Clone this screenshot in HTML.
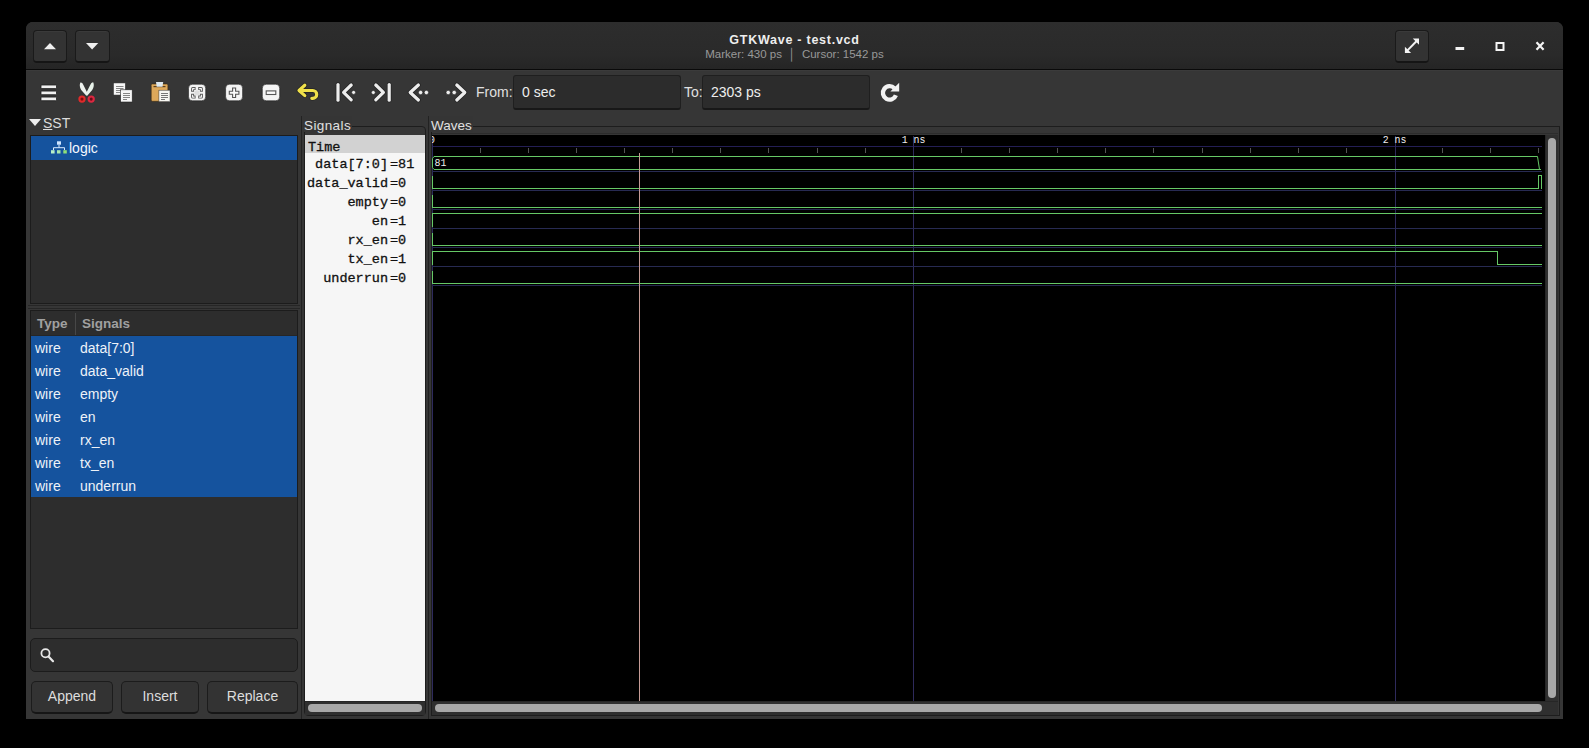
<!DOCTYPE html>
<html><head><meta charset="utf-8">
<style>
*{margin:0;padding:0;box-sizing:border-box}
html,body{width:1589px;height:748px;background:#000;overflow:hidden;font-family:"Liberation Sans",sans-serif}
.a{position:absolute}
#win{left:26px;top:22px;width:1537px;height:697px;background:#363636;border-radius:7px 7px 0 0;overflow:hidden}
#hdr{left:0;top:0;width:1537px;height:48px;background:linear-gradient(#2d2d2d,#2a2a2a 70%,#252525);border-bottom:1px solid #0a0a0a;box-shadow:0 1px #3b3b3b}
.hb{background:#333;border:1px solid #1a1a1a;border-bottom:2px solid #151515;border-radius:4px;box-shadow:inset 0 1px #3a3a3a}
.mono{font-family:"Liberation Mono",monospace;-webkit-text-stroke:0.3px #111}
.tv{background:#2d2d2d;border:1px solid #1c1c1c}
.btn{background:#333;border:1px solid #1c1c1c;border-bottom:2px solid #161616;border-radius:5px;color:#ddd;font-size:14px;text-align:center;line-height:29px}
.wire{color:#eef2f8;font-size:14px}
.sig{left:288px;width:100px;text-align:right;font-size:13.5px;color:#111}
.val{left:390px;font-size:13.5px;color:#111}
.lbl{color:#e0e0e0;font-size:14.3px}
.ent{background:#2c2c2c;border:1px solid #1f1f1f;border-bottom:2px solid #181818;border-radius:3px}
.frame{border:1px solid #1d1d1d;border-radius:4px}
</style></head><body>
<div id="win" class="a">
 <div id="hdr" class="a">
  <div class="a hb" style="left:7px;top:8px;width:34px;height:33px"></div>
  <div class="a hb" style="left:49px;top:8px;width:35px;height:33px"></div>
  <div class="a hb" style="left:1369px;top:8px;width:34px;height:33px"></div>
  <div class="a" style="left:0;top:10.5px;width:1537px;text-align:center;color:#eee;font-weight:bold;font-size:12.5px;letter-spacing:0.75px">GTKWave - test.vcd</div>
  <div class="a" style="left:0;top:26px;width:1537px;text-align:center;color:#999;font-size:11.5px">Marker: 430 ps &nbsp;│&nbsp; Cursor: 1542 ps</div>
 </div>
</div>

<!-- toolbar entries -->
<div class="a lbl" style="left:476px;top:84px;font-size:14px">From:</div>
<div class="a ent" style="left:513px;top:75px;width:168px;height:35px"></div>
<div class="a" style="left:522px;top:84px;color:#eee;font-size:14px">0 sec</div>
<div class="a lbl" style="left:684px;top:84px;font-size:14px">To:</div>
<div class="a ent" style="left:702px;top:75px;width:168px;height:35px"></div>
<div class="a" style="left:711px;top:84px;color:#eee;font-size:14px">2303 ps</div>

<!-- pane separators -->
<div class="a" style="left:301px;top:116px;width:1px;height:603px;background:#222"></div>
<div class="a" style="left:428px;top:116px;width:1px;height:603px;background:#222"></div>

<!-- left panel -->
<div class="a" style="left:29px;top:119px;width:0;height:0;border-left:6px solid transparent;border-right:6px solid transparent;border-top:7px solid #eee"></div>
<div class="a" style="left:43px;top:115px;color:#ddd;font-size:14px"><span style="text-decoration:underline">S</span>ST</div>
<div class="a tv" style="left:30px;top:135px;width:268px;height:169px"></div>
<div class="a" style="left:31px;top:136px;width:266px;height:24px;background:#15539e"></div>
<div class="a" style="left:69px;top:140px;color:#f4f8ff;font-size:14px">logic</div>

<div class="a" style="left:28px;top:305px;width:272px;height:1px;background:#262626"></div>
<div class="a" style="left:28px;top:308px;width:272px;height:1px;background:#262626"></div>
<div class="a tv" style="left:30px;top:310px;width:268px;height:319px"></div>
<div class="a" style="left:31px;top:311px;width:266px;height:25px;background:#2d2d2d;border-bottom:1px solid #262626"></div>
<div class="a" style="left:37px;top:316px;color:#a0a0a0;font-size:13.5px;font-weight:bold">Type</div>
<div class="a" style="left:75px;top:313px;width:1px;height:22px;background:#474747"></div>
<div class="a" style="left:82px;top:316px;color:#a0a0a0;font-size:13.5px;font-weight:bold">Signals</div>
<div class="a" style="left:31px;top:336px;width:266px;height:161px;background:#15539e"></div>
<div class="a wire" style="left:35px;top:340px">wire</div><div class="a wire" style="left:80px;top:340px">data[7:0]</div>
<div class="a wire" style="left:35px;top:363px">wire</div><div class="a wire" style="left:80px;top:363px">data_valid</div>
<div class="a wire" style="left:35px;top:386px">wire</div><div class="a wire" style="left:80px;top:386px">empty</div>
<div class="a wire" style="left:35px;top:409px">wire</div><div class="a wire" style="left:80px;top:409px">en</div>
<div class="a wire" style="left:35px;top:432px">wire</div><div class="a wire" style="left:80px;top:432px">rx_en</div>
<div class="a wire" style="left:35px;top:455px">wire</div><div class="a wire" style="left:80px;top:455px">tx_en</div>
<div class="a wire" style="left:35px;top:478px">wire</div><div class="a wire" style="left:80px;top:478px">underrun</div>

<div class="a tv" style="left:30px;top:638px;width:268px;height:34px;border-radius:5px"></div>
<div class="a btn" style="left:31px;top:681px;width:82px;height:33px">Append</div>
<div class="a btn" style="left:121px;top:681px;width:78px;height:33px">Insert</div>
<div class="a btn" style="left:207px;top:681px;width:91px;height:33px">Replace</div>

<!-- signals pane -->
<div class="a frame" style="left:304px;top:126px;width:122px;height:590px"></div>
<div class="a" style="left:302px;top:116px;width:50px;height:16px;background:#353535"></div>
<div class="a lbl" style="left:304px;top:118px;font-size:13.5px;letter-spacing:0.4px">Signals</div>
<div class="a" style="left:305px;top:135px;width:120px;height:566px;background:#f6f6f6"></div>
<div class="a" style="left:305px;top:701px;width:120px;height:14px;background:#2f2f2f;border-top:1px solid #262626"></div>
<div class="a" style="left:305px;top:135px;width:120px;height:18px;background:#d2d2d2"></div>
<div class="a mono" style="left:308px;top:140px;font-size:13.5px;color:#111">Time</div>
<div class="a mono sig" style="top:157px">data[7:0]</div><div class="a mono val" style="top:157px">=81</div>
<div class="a mono sig" style="top:176px">data_valid</div><div class="a mono val" style="top:176px">=0</div>
<div class="a mono sig" style="top:195px">empty</div><div class="a mono val" style="top:195px">=0</div>
<div class="a mono sig" style="top:214px">en</div><div class="a mono val" style="top:214px">=1</div>
<div class="a mono sig" style="top:233px">rx_en</div><div class="a mono val" style="top:233px">=0</div>
<div class="a mono sig" style="top:252px">tx_en</div><div class="a mono val" style="top:252px">=1</div>
<div class="a mono sig" style="top:271px">underrun</div><div class="a mono val" style="top:271px">=0</div>
<div class="a" style="left:308px;top:704px;width:114px;height:8px;background:#a8a8a8;border-radius:4px"></div>

<!-- waves pane -->
<div class="a frame" style="left:431px;top:126px;width:1129px;height:590px;border-radius:0"></div>
<div class="a" style="left:432px;top:133px;width:1126px;height:1px;background:#2c2c2c"></div>
<div class="a" style="left:430px;top:116px;width:43px;height:16px;background:#353535"></div>
<div class="a lbl" style="left:431px;top:118px;font-size:13.5px">Waves</div>
<div class="a" style="left:432px;top:135px;width:1113px;height:566px;background:#000"></div>
<div class="a" style="left:432px;top:701px;width:1126px;height:14px;background:#2f2f2f;border-top:1px solid #262626"></div>
<div class="a" style="left:1545px;top:135px;width:13px;height:566px;background:#2f2f2f;border-left:1px solid #262626"></div>
<svg class="a" style="left:432px;top:135px" width="1113" height="566" shape-rendering="crispEdges"><line x1="0" y1="11.5" x2="1110" y2="11.5" stroke="#241f55" stroke-width="1"/><line x1="48.5" y1="13" x2="48.5" y2="18" stroke="#555555" stroke-width="1"/><line x1="96.5" y1="13" x2="96.5" y2="18" stroke="#555555" stroke-width="1"/><line x1="144.5" y1="13" x2="144.5" y2="18" stroke="#555555" stroke-width="1"/><line x1="192.5" y1="13" x2="192.5" y2="18" stroke="#555555" stroke-width="1"/><line x1="240.5" y1="13" x2="240.5" y2="18" stroke="#555555" stroke-width="1"/><line x1="288.5" y1="13" x2="288.5" y2="18" stroke="#555555" stroke-width="1"/><line x1="336.5" y1="13" x2="336.5" y2="18" stroke="#555555" stroke-width="1"/><line x1="385.5" y1="13" x2="385.5" y2="18" stroke="#555555" stroke-width="1"/><line x1="433.5" y1="13" x2="433.5" y2="18" stroke="#555555" stroke-width="1"/><line x1="529.5" y1="13" x2="529.5" y2="18" stroke="#555555" stroke-width="1"/><line x1="577.5" y1="13" x2="577.5" y2="18" stroke="#555555" stroke-width="1"/><line x1="625.5" y1="13" x2="625.5" y2="18" stroke="#555555" stroke-width="1"/><line x1="673.5" y1="13" x2="673.5" y2="18" stroke="#555555" stroke-width="1"/><line x1="721.5" y1="13" x2="721.5" y2="18" stroke="#555555" stroke-width="1"/><line x1="770.5" y1="13" x2="770.5" y2="18" stroke="#555555" stroke-width="1"/><line x1="818.5" y1="13" x2="818.5" y2="18" stroke="#555555" stroke-width="1"/><line x1="866.5" y1="13" x2="866.5" y2="18" stroke="#555555" stroke-width="1"/><line x1="914.5" y1="13" x2="914.5" y2="18" stroke="#555555" stroke-width="1"/><line x1="1010.5" y1="13" x2="1010.5" y2="18" stroke="#555555" stroke-width="1"/><line x1="1058.5" y1="13" x2="1058.5" y2="18" stroke="#555555" stroke-width="1"/><line x1="1106.5" y1="13" x2="1106.5" y2="18" stroke="#555555" stroke-width="1"/><line x1="0.5" y1="1" x2="0.5" y2="566" stroke="#2e2a5c" stroke-width="1"/><line x1="481.5" y1="1" x2="481.5" y2="566" stroke="#2e2a5c" stroke-width="1"/><line x1="963.5" y1="1" x2="963.5" y2="566" stroke="#2e2a5c" stroke-width="1"/><line x1="0" y1="36.5" x2="1110" y2="36.5" stroke="#272a52" stroke-width="1"/><line x1="0" y1="55.5" x2="1110" y2="55.5" stroke="#272a52" stroke-width="1"/><line x1="0" y1="74.5" x2="1110" y2="74.5" stroke="#272a52" stroke-width="1"/><line x1="0" y1="93.5" x2="1110" y2="93.5" stroke="#272a52" stroke-width="1"/><line x1="0" y1="112.5" x2="1110" y2="112.5" stroke="#272a52" stroke-width="1"/><line x1="0" y1="131.5" x2="1110" y2="131.5" stroke="#272a52" stroke-width="1"/><line x1="0" y1="150.5" x2="1110" y2="150.5" stroke="#272a52" stroke-width="1"/><path d="M2,21.5 L1105.5,21.5 L1107.5,34.5 M0.5,32.5 L0.5,23.5 L2,21.5 M0.5,32.5 L2,34.5 L1109,34.5" fill="none" stroke="#66c866" stroke-width="1" shape-rendering="auto"/><path d="M0.5,40.5 L0.5,53.5 L1106.5,53.5 L1106.5,40.5 L1109.5,40.5 L1109.5,53.5" fill="none" stroke="#66c866"/><path d="M0.5,59.5 L0.5,72.5 L1110,72.5" fill="none" stroke="#66c866"/><path d="M0.5,91.5 L0.5,78.5 L1110,78.5" fill="none" stroke="#66c866"/><path d="M0.5,97.5 L0.5,110.5 L1110,110.5" fill="none" stroke="#66c866"/><path d="M0.5,129.5 L0.5,116.5 L1065.5,116.5 L1065.5,129.5 L1110,129.5" fill="none" stroke="#66c866"/><path d="M0.5,135.5 L0.5,148.5 L1110,148.5" fill="none" stroke="#66c866"/><line x1="207.5" y1="18" x2="207.5" y2="566" stroke="#c69c96" stroke-width="1"/><g shape-rendering="auto"><text transform="translate(0,8.400000000000006) scale(0.86,1)" text-anchor="middle" fill="#eeeeee" font-family="Liberation Mono" font-size="11.5">0</text><text transform="translate(481.5,8.400000000000006) scale(0.86,1)" text-anchor="middle" fill="#eeeeee" font-family="Liberation Mono" font-size="11.5">1 ns</text><text transform="translate(962.5,8.400000000000006) scale(0.86,1)" text-anchor="middle" fill="#eeeeee" font-family="Liberation Mono" font-size="11.5">2 ns</text><text transform="translate(2.5,31) scale(0.86,1)" text-anchor="start" fill="#eeeeee" font-family="Liberation Mono" font-size="11.5">81</text></g></svg>
<div class="a" style="left:435px;top:704px;width:1107px;height:8px;background:#a8a8a8;border-radius:4px"></div>
<div class="a" style="left:1548px;top:138px;width:8px;height:560px;background:#a8a8a8;border-radius:4px"></div>
<svg class="a" style="left:0;top:0" width="1589" height="748">
 <!-- header up/down -->
 <path d="M44 49.3 L50 43 L56 49.3Z" fill="#f0f0f0"/>
 <path d="M86 43 L98.3 43 L92.1 49.5Z" fill="#f0f0f0"/>
 <!-- fullscreen -->
 <path d="M1412.8 38.6 L1419 38.6 L1419 44.8Z M1404.9 46.8 L1404.9 53 L1411.1 53Z" fill="#f4f4f4"/>
 <path d="M1407 50.9 L1416.9 40.7" stroke="#f4f4f4" stroke-width="2"/>
 <!-- minimize / maximize / close -->
 <rect x="1455.5" y="47" width="8.7" height="3" fill="#f4f4f4"/>
 <rect x="1496.5" y="43" width="7" height="7" fill="none" stroke="#f4f4f4" stroke-width="2"/>
 <path d="M1536.5 42.2 L1543.6 49.7 M1543.6 42.2 L1536.5 49.7" stroke="#f4f4f4" stroke-width="2.2"/>
 <!-- hamburger -->
 <g fill="#f0f0f0" stroke="#1c1c1c" stroke-width="0.8">
  <rect x="41" y="85" width="15.5" height="3.6" rx="0.8"/>
  <rect x="41" y="91.1" width="15.5" height="3.6" rx="0.8"/>
  <rect x="41" y="97.1" width="15.5" height="3.6" rx="0.8"/>
 </g>
 <!-- scissors -->
 <path d="M80.4 82.6 Q78.8 86 81.2 90 L86.6 96 L87.4 93 L83.4 85 Q82.3 82.3 80.4 82.6Z" fill="#eef2ee"/>
 <path d="M93.2 82.3 Q94.8 86 92.2 90 L87 96 L86.2 93 L90.2 85 Q91.3 82.1 93.2 82.3Z" fill="#e8f2ea"/>
 <circle cx="82" cy="99.1" r="2.6" fill="#7a1010" stroke="#e02a2a" stroke-width="2.1"/>
 <circle cx="91.2" cy="99.1" r="2.6" fill="#6a0c18" stroke="#dc2840" stroke-width="2.1"/>
 <!-- copy -->
 <rect x="113.3" y="82.9" width="12.2" height="12.2" fill="#f7f7f7" stroke="#222" stroke-width="0.6"/>
 <g stroke="#777" stroke-width="0.9"><path d="M116 86.5H123.5M116 88.5H123.5M116 90.5H123.5M116 92.5H120"/></g>
 <rect x="120.6" y="89.8" width="11.6" height="12.2" fill="#f7f7f7" stroke="#222" stroke-width="0.6"/>
 <g stroke="#777" stroke-width="0.9"><path d="M123 93.5H130M123 95.5H130M123 97.5H130M123 99.5H127"/></g>
 <!-- paste -->
 <rect x="151.2" y="84" width="16.7" height="17.3" rx="1.2" fill="#dda85a" stroke="#3a2a10" stroke-width="0.6"/>
 <rect x="153.5" y="86" width="12" height="1.2" fill="#5a4020"/>
 <path d="M156 82 H163.2 L162.5 86.8 H156.7Z" fill="#dde8ee"/>
 <rect x="158.9" y="90.2" width="11.1" height="11.5" fill="#f7f7f2" stroke="#333" stroke-width="0.5"/>
 <g stroke="#666" stroke-width="0.9"><path d="M161 93.5H168M161 95.5H168M161 97.5H168M161 99.5H165"/></g>
 <!-- zoom fit / in / out -->
 <rect x="188.5" y="84.2" width="17.2" height="16.6" rx="4" fill="#f4f4f4" stroke="#1e1e1e" stroke-width="0.6"/>
 <circle cx="197" cy="92.8" r="2.6" fill="#dedede"/>
 <g fill="none" stroke-linecap="butt" stroke-linejoin="round">
  <path d="M192.6 91.7 V88.6 H195.6 M198.2 88.6 H201.4 V91.7 M192.6 93.8 V97.1 H195.6 M198.2 97.1 H201.4 V93.8" stroke="#5a5a5a" stroke-width="3"/>
  <path d="M192.6 90.8 V88.6 H194.7 M199.1 88.6 H201.4 V90.8 M192.6 94.7 V97.1 H194.7 M199.1 97.1 H201.4 V94.7" stroke="#fafafa" stroke-width="1.1"/>
 </g>
 <rect x="225.6" y="84.2" width="17" height="16.6" rx="4" fill="#f4f4f4" stroke="#1e1e1e" stroke-width="0.6"/>
 <path d="M232.6 88 H235.6 V91.3 H238.9 V94.3 H235.6 V97.5 H232.6 V94.3 H229.3 V91.3 H232.6Z" fill="#fafafa" stroke="#555" stroke-width="1.1"/>
 <rect x="262.3" y="84.2" width="17.4" height="16.6" rx="4" fill="#f4f4f4" stroke="#1e1e1e" stroke-width="0.6"/>
 <rect x="266.2" y="90.9" width="9.6" height="3.6" fill="#fafafa" stroke="#555" stroke-width="1.1"/>
 <!-- undo -->
 <g fill="none" stroke-linecap="round" stroke-linejoin="round">
  <g stroke="#1c1c1c" stroke-width="4.6" opacity="0.7"><path d="M304.8 85.2 L299 90.5 L304.8 95.6"/><path d="M300 90.5 H312.8 A3.9 3.9 0 0 1 312.8 98.3 H311.8"/><path d="M338 84.6 V100.2"/><path d="M351.2 85 L343.6 92.4 L351.2 99.8"/><path d="M389.2 84.6 V100.2"/><path d="M375.8 85 L383.4 92.4 L375.8 99.8"/><path d="M418.4 85 L410.2 92.5 L418.4 100"/><path d="M456.8 85 L464.8 92.5 L456.8 100"/></g>
  <g stroke="#efe04a" stroke-width="3.2"><path d="M304.8 85.2 L299 90.5 L304.8 95.6"/><path d="M300 90.5 H312.8 A3.9 3.9 0 0 1 312.8 98.3 H311.8"/></g>
  <g stroke="#ededed" stroke-width="3.2"><path d="M338 84.6 V100.2"/><path d="M351.2 85 L343.6 92.4 L351.2 99.8"/><path d="M389.2 84.6 V100.2"/><path d="M375.8 85 L383.4 92.4 L375.8 99.8"/><path d="M418.4 85 L410.2 92.5 L418.4 100"/><path d="M456.8 85 L464.8 92.5 L456.8 100"/></g>
 </g>
 <g fill="#ededed" stroke="#1c1c1c" stroke-width="0.6"><circle cx="353.6" cy="92.4" r="2.0"/><circle cx="373.3" cy="92.5" r="2.0"/><circle cx="420.6" cy="92.5" r="2.2"/><circle cx="426.4" cy="92.5" r="2.2"/><circle cx="448.2" cy="92.5" r="2.2"/><circle cx="454.2" cy="92.5" r="2.2"/></g>
 <!-- refresh -->
 <path d="M895.9 95.2 A6.7 6.7 0 1 1 894.4 88.2" fill="none" stroke="#f2f2f2" stroke-width="4.3"/>
 <path d="M890.4 91.6 L899.2 82.8 L899.2 91.6Z" fill="#f2f2f2"/>

 <!-- logic icon -->
 <rect x="57" y="141.3" width="4" height="3.4" fill="#cfe6ff"/>
 <path d="M53.5 150 V147.7 H64.5 V150 M59 144.7 V147.7" fill="none" stroke="#d8ecff" stroke-width="1"/>
 <rect x="51" y="150.2" width="3.6" height="3.3" fill="#b8f0c8"/>
 <rect x="57" y="150.2" width="3.5" height="3.3" fill="#a8e8b0"/>
 <rect x="63.3" y="150.2" width="3.5" height="3.3" fill="#90e078"/>
 <!-- search -->
 <circle cx="45.5" cy="653.3" r="4.1" fill="none" stroke="#e8e8e8" stroke-width="1.8"/>
 <path d="M48.5 656.5 L53 661.2" stroke="#e8e8e8" stroke-width="2.2" stroke-linecap="round"/>
</svg>

</body></html>
